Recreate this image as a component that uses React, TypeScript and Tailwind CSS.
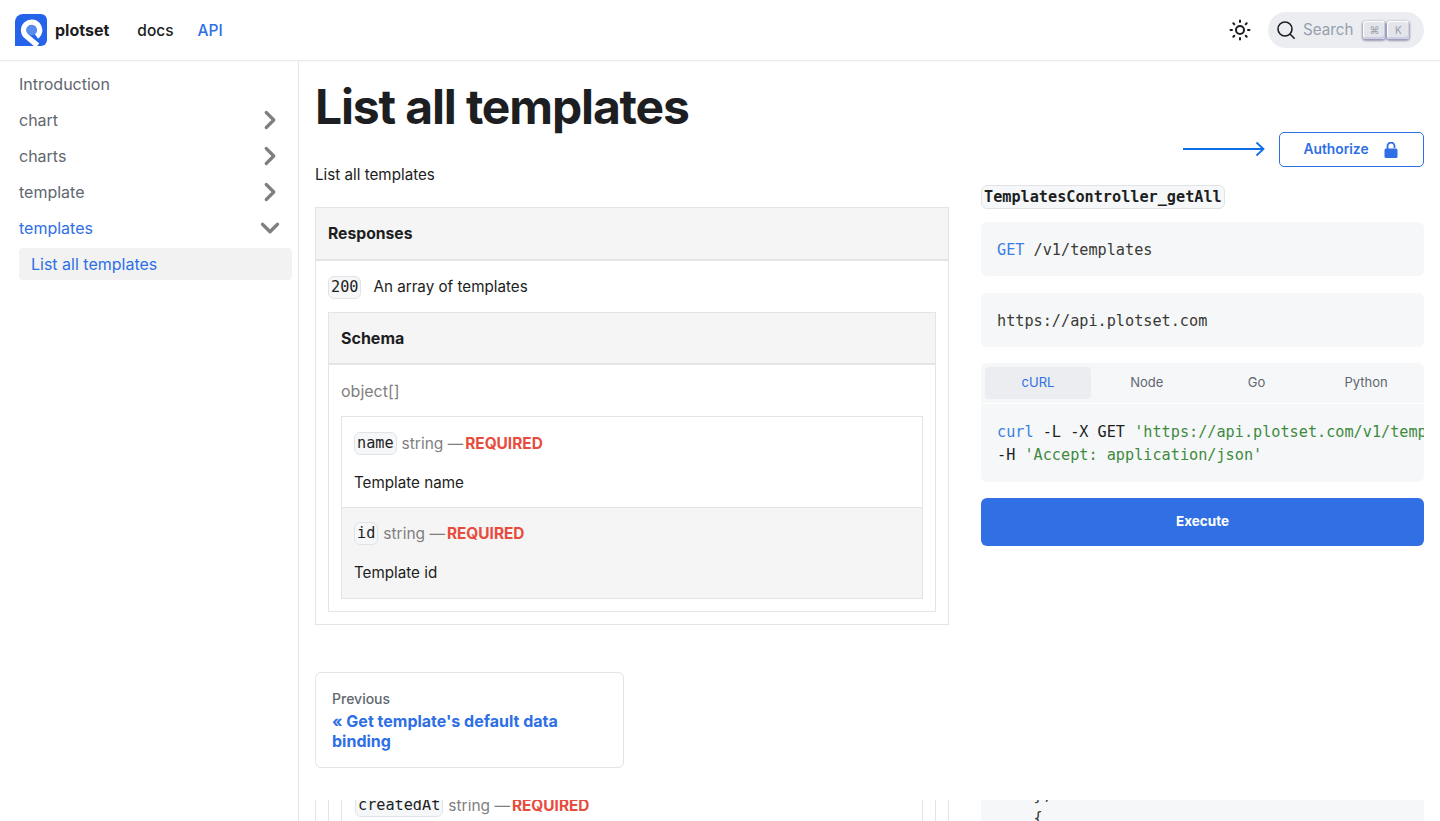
import type { ReactNode } from "react";
import { ChevronDown, ChevronRight } from "lucide-react";

const sans = "font-['Inter','Noto_Sans',sans-serif]";
const mono = "font-['DejaVu_Sans_Mono','Liberation_Mono',monospace]";

function Logo() {
  return (
    <svg width="32" height="32" viewBox="0 0 32 32" className="shrink-0">
      <path d="M8 0h18a6 6 0 0 1 6 6v20a6 6 0 0 1-6 6H0V8a8 8 0 0 1 8-8z" fill="#2563eb" />
      <path
        d="M21.500 22.500A8 8 0 1 0 11 21.800L22.500 31.500"
        fill="none"
        stroke="#fff"
        strokeWidth="5.500"
      />
      <circle cx="16.500" cy="16" r="5.200" fill="#5b8def" />
    </svg>
  );
}

function SunIcon() {
  return (
    <svg width="24" height="24" viewBox="0 0 24 24" fill="none" stroke="#1c1e21" strokeWidth="2" strokeLinecap="round">
      <circle cx="12" cy="12" r="4" />
      <path d="M12 2.500v1.500M12 20v1.500M2.500 12H4M20 12h1.500M5.300 5.300l1 1M17.700 17.700l1 1M5.300 18.700l1-1M17.700 6.300l1-1" />
    </svg>
  );
}

function Kbd({ children }: { children: string }) {
  return (
    <span className="flex h-[18px] w-[22px] items-center justify-center rounded-[3px] bg-[#e3e5ea] text-[10px] text-[#969faf] shadow-[inset_-1px_-2px_0_0_#cdcde6,inset_0_0_1px_1px_#fff,0_1px_2px_1px_rgba(30,35,90,0.4)]">
      {children}
    </span>
  );
}

function Header() {
  return (
    <header className="flex h-[61px] shrink-0 items-center border-b border-[#ececec] pl-[15px] pr-4 shadow-[0_1px_2px_0_rgba(0,0,0,0.03)]">
      <Logo />
      <span className="ml-2 text-[16px] font-bold text-[#1c1e21]">plotset</span>
      <span className="ml-[28px] pt-[1px] text-[15.5px] font-medium text-[#1c1e21]">docs</span>
      <span className="ml-6 pt-[1px] text-[15.5px] font-medium text-[#2e6fe5]">API</span>
      <div className="ml-auto flex items-center gap-4">
        <SunIcon />
        <div className="flex h-9 w-[156px] items-center rounded-full bg-[#ebedf0] pl-2">
          <svg width="20" height="20" viewBox="0 0 20 20" fill="none" stroke="#1c1e21" strokeWidth="1.600" strokeLinecap="round">
            <circle cx="9" cy="9" r="7" />
            <path d="m14.200 14.200 4 4" />
          </svg>
          <span className="ml-[7px] pt-[1px] text-[15.2px] text-[#969faf]">Search</span>
          <span className="ml-[10px] flex gap-[2px]">
            <Kbd>⌘</Kbd>
            <Kbd>K</Kbd>
          </span>
        </div>
      </div>
    </header>
  );
}

function SideItem({ label, open, closed, blue }: { label: string; open?: boolean; closed?: boolean; blue?: boolean }) {
  return (
    <div className={`flex h-9 items-center justify-between pr-[7px] text-[16px] ${blue ? "text-[#2e6fe5]" : "text-[#606770]"}`}>
      <span>{label}</span>
      {closed && <ChevronRight size={30} strokeWidth={2.600} className="text-[#7f7f7f]" />}
      {open && <ChevronDown size={30} strokeWidth={2.600} className="text-[#7f7f7f]" />}
    </div>
  );
}

function Sidebar() {
  return (
    <aside className="w-[299px] shrink-0 border-r border-[#e3e4e6] pl-[19px] pr-[6px] pt-[5px]">
      <SideItem label="Introduction" />
      <SideItem label="chart" closed />
      <SideItem label="charts" closed />
      <SideItem label="template" closed />
      <SideItem label="templates" open blue />
      <div className="mt-[2px] flex h-8 items-center rounded-[4px] bg-[#f2f2f2] pl-3 text-[16px] text-[#2e6fe5]">
        List all templates
      </div>
    </aside>
  );
}

function Code({ children, bold }: { children: string; bold?: boolean }) {
  return (
    <code className={`${mono} inline-block rounded-[6px] border border-[#e2e3e6] bg-[#f6f7f8] px-[2px] text-[15.2px] text-[#1c1e21] ${bold ? "font-bold leading-[22px]" : "leading-[21px]"}`}>
      {children}
    </code>
  );
}

function RequiredLine({ name }: { name: string }) {
  return (
    <div className="flex items-center text-[15.5px]">
      <Code>{name}</Code>
      <span className="ml-[5px] text-[#7f7f7f]">string —</span>
      <span className="ml-[2px] text-[15.4px] font-bold text-[#e74c3c]">REQUIRED</span>
    </div>
  );
}

function Field({ name, desc, shaded }: { name: string; desc: string; shaded?: boolean }) {
  return (
    <div className={`h-[90px] pl-3 ${shaded ? "bg-[#f5f5f5] pt-[14px]" : "bg-white pt-[15px]"}`}>
      <RequiredLine name={name} />
      <p className="mt-4 text-[15.2px] leading-[24px] text-[#1c1e21]">{desc}</p>
    </div>
  );
}

function LeftColumn() {
  return (
    <div className="w-[634px] shrink-0">
      <h1 className="mt-[17px] text-[48px] font-bold leading-[58px] tracking-[-1.150px] text-[#1c1e21]">List all templates</h1>
      <p className="mt-[27px] text-[15.2px] leading-[24px] text-[#1c1e21]">List all templates</p>
      <div className="mt-5 border border-[#e3e4e6]">
        <div className="flex h-[53px] items-center border-b-2 border-[#e3e4e6] bg-[#f5f5f5] pl-3 text-[15.7px] font-bold text-[#1c1e21]">
          Responses
        </div>
        <div className="px-3 pb-3 pt-[15px]">
          <div className="flex items-center text-[15.2px] text-[#1c1e21]">
            <Code>200</Code>
            <span className="ml-3">An array of templates</span>
          </div>
          <div className="mt-[13px] border border-[#e3e4e6]">
            <div className="flex h-[52px] items-center border-b-2 border-[#e3e4e6] bg-[#f5f5f5] pl-3 text-[16px] font-bold text-[#1c1e21]">
              Schema
            </div>
            <div className="px-3 pb-3 pt-[14px]">
              <p className="text-[16px] leading-[24px] text-[#7f7f7f]">object[]</p>
              <div className="mt-[13px] border border-[#e3e4e6]">
                <Field name="name" desc="Template name" />
                <div className="border-t border-[#e3e4e6]">
                  <Field name="id" desc="Template id" shaded />
                </div>
              </div>
            </div>
          </div>
        </div>
      </div>
      <div className="mt-[47px] h-[96px] w-[309px] rounded-[6px] border border-[#e3e4e6] pl-4 pr-4 pt-[17px]">
        <p className="text-[14px] font-medium leading-[17px] text-[#606770]">Previous</p>
        <p className="mt-1 text-[16px] font-bold leading-[20px] text-[#2e6fe5]">« Get template's default data binding</p>
      </div>
    </div>
  );
}

function Panel({ children, className }: { children: ReactNode; className?: string }) {
  return <div className={`rounded-[6px] bg-[#f6f7f8] ${mono} text-[15.2px] ${className ?? ""}`}>{children}</div>;
}

function RightColumn() {
  return (
    <div className="ml-[32px] w-[443px] shrink-0 pt-[71px]">
      <div className="flex items-center justify-end">
        <svg width="82" height="16" viewBox="0 0 82 16" fill="none" stroke="#0b6fe6" strokeWidth="1.800" className="mb-[1px] mr-[14px]">
          <path d="M0 8h80.500M73.500 1.500 80.500 8l-7 6.500" />
        </svg>
        <button type="button" className="flex h-[35px] w-[145px] items-center justify-center rounded-[5px] border border-[#2e6fe5] pr-[2px] text-[13.8px] font-semibold text-[#2e6fe5]">
          Authorize
          <svg width="14" height="16" viewBox="0 0 14 16" className="ml-[15px]" fill="#2e6fe5">
            <rect x="0.500" y="6.500" width="13" height="9.500" rx="1.500" />
            <path d="M3.500 7V4a3.500 3.500 0 0 1 7 0v2" fill="none" stroke="#2e6fe5" strokeWidth="1.800" />
          </svg>
        </button>
      </div>
      <div className="mt-[18px] flex h-[24px]">
        <Code bold>TemplatesController_getAll</Code>
      </div>
      <Panel className="mt-[13px] flex h-[54px] items-center pl-4 pt-[2px] text-[#393a34]">
        <span className="text-[#3d7fe0]">GET</span>&nbsp;/v1/templates
      </Panel>
      <Panel className="mt-[17px] flex h-[54px] items-center pl-4 pt-[2px] text-[#393a34]">https://api.plotset.com</Panel>
      <div className="mt-4">
        <div className="flex h-[40px] items-center gap-[2px] rounded-t-[6px] bg-[#f6f7f8] px-1 text-[13px]">
          <span className="flex h-[32px] w-[106px] items-center justify-center rounded-[4px] bg-[#ebedf0] text-[#2e6fe5]">cURL</span>
          <span className="flex-1 text-center text-[#606770]">Node</span>
          <span className="flex-1 text-center text-[#606770]">Go</span>
          <span className="flex-1 text-center text-[#606770]">Python</span>
        </div>
        <div className={`mt-[1px] h-[78px] overflow-hidden whitespace-pre rounded-b-[6px] bg-[#f6f7f8] pl-4 pt-[17px] ${mono} text-[15.2px] leading-[23px] text-[#1c1e21]`}>
          <div>
            <span className="text-[#3d7fe0]">curl</span> -L -X GET <span className="text-[#3f8a3f]">'https://api.plotset.com/v1/templates'</span>
          </div>
          <div>
            -H <span className="text-[#3f8a3f]">'Accept: application/json'</span>
          </div>
        </div>
      </div>
      <button type="button" className="mt-4 h-12 w-full rounded-[6px] bg-[#316fe5] pb-[1px] text-[13.500px] font-bold text-white">
        Execute
      </button>
    </div>
  );
}

function BottomStrip() {
  return (
    <div className="flex h-[21px] shrink-0 overflow-hidden bg-white">
      <div className="w-[299px] shrink-0 border-r border-[#e3e4e6]" />
      <div className="ml-4 flex w-[634px] shrink-0 border-x border-[#e3e4e6] pl-3 pr-3">
        <div className="flex flex-1 border-x border-[#e3e4e6] pl-3 pr-3">
          <div className="flex-1 border-x border-[#e3e4e6] pl-[13px]">
            <div className="-mt-[6px]">
              <RequiredLine name="createdAt" />
            </div>
          </div>
        </div>
      </div>
      <div className={`ml-[32px] w-[443px] shrink-0 whitespace-pre bg-[#f6f7f8] pl-4 ${mono} text-[15.2px] leading-[23px] text-[#393a34]`}>
        <div className="-mt-[16px]">{"    },"}</div>
        <div>{"    {"}</div>
      </div>
    </div>
  );
}

export default function App() {
  return (
    <div className={`flex h-[821px] w-[1440px] flex-col overflow-hidden bg-white ${sans}`}>
      <Header />
      <div className="flex h-[739px] shrink-0">
        <Sidebar />
        <main className="ml-4 flex">
          <LeftColumn />
          <RightColumn />
        </main>
      </div>
      <BottomStrip />
    </div>
  );
}
